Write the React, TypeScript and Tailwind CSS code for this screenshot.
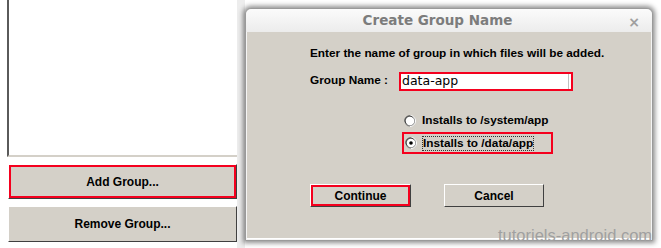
import React from "react";

const font = { fontFamily: '"Liberation Sans", Arial, sans-serif' };
const titleFont = { fontFamily: '"DejaVu Sans", Verdana, sans-serif' };

function Win95Button({ label, red, className = "" }: { label: string; red?: boolean; className?: string }) {
  return (
    <div
      className={`flex items-center justify-center bg-[#d4d0c8] border-t border-l border-t-[#ffffff] border-l-[#ffffff] border-b border-r border-b-[#404040] border-r-[#404040] ${className}`}
    >
      <div
        className={`flex h-full w-full items-center justify-center ${red ? "border-2 border-[#f5001e]" : ""}`}
      >
        <span className="text-[12px] font-bold text-black" style={font}>
          {label}
        </span>
      </div>
    </div>
  );
}

function Radio({ checked }: { checked?: boolean }) {
  return (
    <svg width="12" height="12" viewBox="0 0 12 12" className="shrink-0">
      <circle cx="6" cy="6" r="5.5" fill="#808080" />
      <path d="M6 0.5 A5.5 5.5 0 0 1 11.5 6 A5.5 5.5 0 0 1 6 11.5" fill="none" stroke="#ffffff" strokeWidth="1" />
      <circle cx="6" cy="6" r="4.3" fill="#ffffff" />
      <path d="M2.2 8.5 A4.3 4.3 0 0 1 8.5 2.2" fill="none" stroke="#404040" strokeWidth="1" />
      {checked && <circle cx="6" cy="6" r="1.8" fill="#000000" />}
    </svg>
  );
}

export default function App() {
  return (
    <div className="relative flex h-[248px] w-[661px] overflow-hidden bg-white" style={font}>
      {/* left panel */}
      <div className="ml-[7px] flex w-[230px] shrink-0 flex-col">
        <div className="h-[157px] border-l-2 border-b-2 border-l-[#5a5a5a] border-b-[#d4d0c8] bg-white" />
        <Win95Button label="Add Group..." red className="mt-[7px] h-[35px] ml-[1px]" />
        <Win95Button label="Remove Group..." className="mt-[7px] h-[36px] ml-[1px]" />
      </div>
      <div className="w-[8px] shrink-0 bg-[#ededed]" />

      {/* dialog */}
      <div className="mt-[8px] flex h-[233px] w-[408px] shrink-0 flex-col rounded-t-[6px] border border-[#9a9a9a] bg-[#f4f4f4] shadow-[0_0_5px_2px_rgba(0,0,0,0.45)]">
        <div className="relative flex h-[23px] shrink-0 items-center justify-center rounded-t-[6px] bg-gradient-to-b from-[#fbfbfb] to-[#ececec] pr-[23px]">
          <span className="text-[13.5px] font-bold text-[#7c7c7c]" style={titleFont}>
            Create Group Name
          </span>
          <span className="absolute right-[12px] top-[3px] text-[14px] font-bold text-[#a0a0a0]" style={titleFont}>×</span>
        </div>
        <div className="mx-[1px] mb-[1px] flex flex-1 flex-col border-b border-b-white bg-[#d4d0c8] pl-[63px]">
          <div className="mt-[13px] whitespace-nowrap text-[11.8px] font-bold text-black">Enter the name of group in which files will be added.</div>
          <div className="mt-[9px] flex items-center">
            <span className="w-[89px] text-[11.8px] font-bold text-black">Group Name :</span>
            <div className="flex h-[19px] w-[174px] items-center border-2 border-[#f5001e] bg-white pl-[1px]">
              <span className="text-[12.5px] text-black" style={titleFont}>data-app</span>
              <div className="ml-auto mr-[1px] h-full w-[2px] border-l border-[#c0c0c0]" />
            </div>
          </div>
          <div className="ml-[94px] mt-[21px] flex items-center gap-[6px]">
            <Radio />
            <span className="text-[11.8px] font-bold text-black">Installs to /system/app</span>
          </div>
          <div className="ml-[92px] mt-[3px] flex h-[22px] w-[151px] items-center gap-[5px] border-2 border-[#f5001e] pl-[1px]">
            <Radio checked />
            <span className="border border-dotted border-[#333] text-[11.8px] font-bold leading-[13px] text-black">Installs to /data/app</span>
          </div>
          <div className="mt-[30px] flex gap-[33px]">
            <Win95Button label="Continue" red className="h-[23px] w-[101px] border-0" />
            <Win95Button label="Cancel" className="h-[23px] w-[100px]" />
          </div>
        </div>
      </div>

      {/* watermark */}
      <span
        className="absolute left-[498px] top-[223px] whitespace-nowrap text-[16.5px] text-[#a0a0a0]"
        style={font}
      >
        tutoriels-android.com
      </span>
    </div>
  );
}
